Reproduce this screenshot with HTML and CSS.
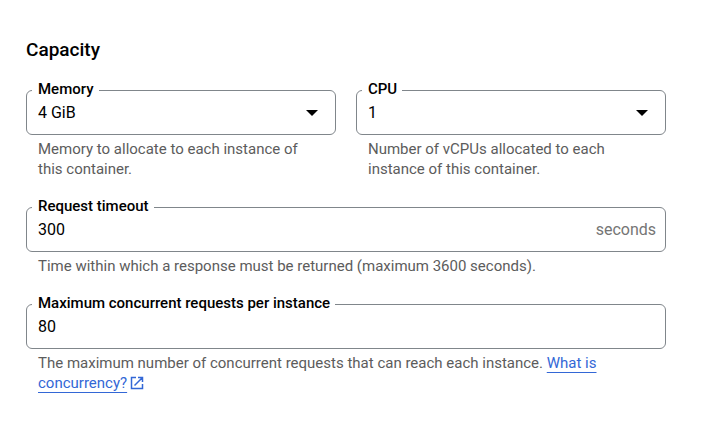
FILE: index.html
```html
<!DOCTYPE html>
<html lang="en">
<head>
<meta charset="utf-8">
<title>Capacity</title>
<link rel="stylesheet" href="styles.css">
</head>
<body>
<form class="capacity">
  <h2 class="heading">Capacity</h2>
  <div class="row">
    <div class="field">
      <fieldset class="box">
        <legend class="legend"><label for="memory">Memory</label></legend>
        <div class="control">
          <select class="input" id="memory" aria-describedby="memory-hint"><option>4 GiB</option></select>
          <svg class="arrow" viewBox="0 0 12 6" aria-hidden="true"><path d="M0 0h12L6 6z"/></svg>
        </div>
      </fieldset>
      <p class="hint" id="memory-hint">Memory to allocate to each instance of this container.</p>
    </div>
    <div class="field">
      <fieldset class="box">
        <legend class="legend"><label for="cpu">CPU</label></legend>
        <div class="control">
          <select class="input" id="cpu" aria-describedby="cpu-hint"><option>1</option></select>
          <svg class="arrow" viewBox="0 0 12 6" aria-hidden="true"><path d="M0 0h12L6 6z"/></svg>
        </div>
      </fieldset>
      <p class="hint" id="cpu-hint">Number of vCPUs allocated to each instance of this container.</p>
    </div>
  </div>
  <div class="field">
    <fieldset class="box">
      <legend class="legend"><label for="timeout">Request timeout</label></legend>
      <div class="control">
        <input class="input" id="timeout" type="text" value="300" aria-describedby="timeout-hint">
        <span class="suffix">seconds</span>
      </div>
    </fieldset>
    <p class="hint" id="timeout-hint">Time within which a response must be returned (maximum 3600 seconds).</p>
  </div>
  <div class="field">
    <fieldset class="box">
      <legend class="legend"><label for="concurrency">Maximum concurrent requests per instance</label></legend>
      <div class="control">
        <input class="input" id="concurrency" type="text" value="80" aria-describedby="concurrency-hint">
      </div>
    </fieldset>
    <p class="hint" id="concurrency-hint">The maximum number of concurrent requests that can reach each instance. <a class="link" href="#">What is concurrency?<svg class="external" viewBox="0 0 14 14" aria-hidden="true"><path d="M6 1.5H1.500v11h11V8M8 1.500h4.500V6M12.500 1.500L4.500 9.500"/></svg></a></p>
  </div>
</form>
</body>
</html>
```

FILE: styles.css
```css
* {
  box-sizing: border-box;
}

body {
  margin: 0;
  background: #fff;
  color: #000;
  font-family: Roboto, "Liberation Sans", sans-serif;
}

.capacity {
  display: flex;
  flex-direction: column;
  gap: 19px;
  padding: 38px 44px 32px 26px;
}

.heading {
  margin: 0;
  font-size: 19px;
  font-weight: 500;
  line-height: 24px;
}

.row {
  display: grid;
  grid-template-columns: 1fr 1fr;
  gap: 20px;
}

.box {
  min-width: 0;
  height: 54px;
  margin: 0;
  padding: 0 9px 0 11px;
  border: 1px solid #80868b;
  border-radius: 6px;
}

.legend {
  margin-left: -6px;
  padding: 0 5px 2px 6px;
  font-size: 15px;
  font-weight: 500;
  line-height: 16px;
}

.control {
  display: flex;
  align-items: center;
  height: 28px;
}

.input {
  flex: 1;
  min-width: 0;
  padding: 0;
  border: 0;
  outline: 0;
  appearance: none;
  background: transparent;
  color: #000;
  font: 400 16px/24px Roboto, "Liberation Sans", sans-serif;
}

.arrow {
  width: 12px;
  height: 6px;
  margin-right: 8px;
}

.suffix {
  color: #757575;
  font-size: 16px;
  line-height: 24px;
}

.hint {
  margin: 0;
  padding: 4px 12px 0;
  color: #5c5c5c;
  font-size: 15px;
  line-height: 20px;
}

.link {
  color: #3367d6;
  text-underline-offset: 4px;
}

.external {
  width: 14px;
  height: 14px;
  margin-left: 3px;
  vertical-align: -2px;
  fill: none;
  stroke: currentColor;
  stroke-width: 1.5;
}
```
